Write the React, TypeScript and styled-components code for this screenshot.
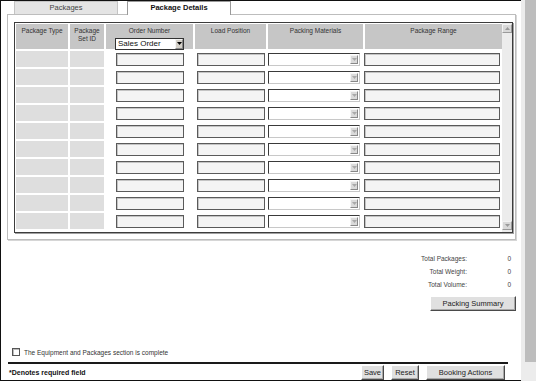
import * as React from 'react';
import styled, { createGlobalStyle } from 'styled-components';

const GlobalStyle = createGlobalStyle`
  html, body {
    margin: 0;
    padding: 0;
    background: #ffffff;
  }
  body {
    font-family: "Liberation Sans", Arial, sans-serif;
  }
`;

const Page = styled.div`
  width: 536px;
  height: 381px;
  display: flex;
  overflow: hidden;
`;

const Main = styled.div`
  flex: 1;
  display: flex;
  flex-direction: column;
  border-left: 1px solid #111;
  border-top: 1px solid #111;
  border-bottom: 1px solid #111;
`;

const PageScroll = styled.div`
  width: 15px;
  background: #ececec;
  display: flex;
  justify-content: flex-end;
`;

const PageThumb = styled.div`
  width: 11px;
  height: 362px;
  background: #bdbdbd;
`;

const TabBar = styled.div`
  display: flex;
  align-items: flex-start;
  gap: 9px;
  height: 13px;
  padding-left: 13px;
`;

const Tab = styled.div<{ $active?: boolean; $w: number }>`
  width: ${(p) => p.$w}px;
  height: ${(p) => (p.$active ? 14 : 13)}px;
  box-sizing: border-box;
  border: 1px solid ${(p) => (p.$active ? '#9a9a9a' : '#c4c4c4')};
  border-bottom: none;
  background: ${(p) => (p.$active ? '#ffffff' : '#e4e4e4')};
  color: ${(p) => (p.$active ? '#111' : '#444')};
  font-size: 7.5px;
  font-weight: ${(p) => (p.$active ? 'bold' : 'normal')};
  line-height: 12px;
  text-align: center;
  position: relative;
  z-index: 1;
`;

const Panel = styled.div`
  margin-left: 6px;
  width: 509px;
  box-sizing: border-box;
  border: 1px solid #bdbdbd;
  box-shadow: 1px 1px 0 #d6d6d6;
  padding: 7px 2px 6px 6px;
`;

const Frame = styled.div`
  display: flex;
  border: 1px solid #3c3c3c;
  box-shadow: 1px 1px 0 #a0a0a0;
`;

const Grid = styled.div`
  flex: 1;
  display: grid;
  grid-template-columns: 52px 34px 87px 71px 95px 137px;
  grid-template-rows: 25px;
  grid-auto-rows: 16px;
  column-gap: 2px;
  row-gap: 2px;
  padding: 1px 0 3px 1px;
`;

const HeaderCell = styled.div`
  background: #c6c6c6;
  color: #333;
  font-size: 6.5px;
  line-height: 7.5px;
  text-align: center;
  padding-top: 3px;
  display: flex;
  flex-direction: column;
  align-items: center;
  gap: 3px;
`;

const Cell = styled.div<{ $shaded?: boolean }>`
  background: ${(p) => (p.$shaded ? '#dedede' : 'transparent')};
  display: flex;
  align-items: center;
`;

const TextBox = styled.div<{ $w: number; $ml?: number }>`
  width: ${(p) => p.$w}px;
  margin-left: ${(p) => p.$ml || 0}px;
  height: 13px;
  box-sizing: border-box;
  background: #f4f4f4;
  border: 1px solid #5a5a5a;
  box-shadow: inset 1px 1px 0 #c4c4c4;
`;

const Combo = styled.div<{ $w: number }>`
  width: ${(p) => p.$w}px;
  height: 13px;
  box-sizing: border-box;
  background: #ffffff;
  border-top: 1px solid #3a3a3a;
  border-left: 1px solid #3a3a3a;
  border-right: 1px solid #c8c8c8;
  border-bottom: 1px solid #c8c8c8;
  display: flex;
  justify-content: flex-end;
  align-items: stretch;
  padding: 1px;
`;

const ComboArrow = styled.div<{ $dark?: boolean }>`
  width: 8px;
  background: ${(p) => (p.$dark ? '#d4d0c8' : '#dadada')};
  border: 1px solid;
  border-color: #f4f4f4 #888 #888 #f4f4f4;
  box-sizing: border-box;
  display: flex;
  align-items: center;
  justify-content: center;
`;

const OrderSelect = styled.div`
  width: 69px;
  height: 12px;
  box-sizing: border-box;
  background: #ffffff;
  border: 1px solid #333;
  display: flex;
  align-items: stretch;
  font-size: 8px;
  color: #111;
  text-align: left;
  margin-left: 9px;
  align-self: flex-start;
`;

const OrderSelectText = styled.span`
  flex: 1;
  line-height: 10px;
  padding-left: 2px;
`;

const GridScroll = styled.div`
  width: 10px;
  background: #ececec;
  display: flex;
  flex-direction: column;
  justify-content: space-between;
  padding: 1px 0 2px;
`;

const ScrollButton = styled.div`
  height: 9px;
  background: #d8d8d8;
  border: 1px solid;
  border-color: #f2f2f2 #9a9a9a #9a9a9a #f2f2f2;
  box-sizing: border-box;
  display: flex;
  align-items: center;
  justify-content: center;
`;

const Totals = styled.div`
  display: grid;
  grid-template-columns: auto 44px;
  justify-content: end;
  padding-right: 10px;
  margin-top: 12px;
  font-size: 6.5px;
  line-height: 13px;
  color: #444;
`;

const TotalLabel = styled.span`
  text-align: right;
`;

const TotalValue = styled.span`
  text-align: right;
`;

const SummaryRow = styled.div`
  display: flex;
  justify-content: flex-end;
  padding-right: 5px;
  margin-top: 5px;
`;

const Button = styled.button<{ $w: number }>`
  width: ${(p) => p.$w}px;
  height: 15px;
  padding: 0;
  margin: 0;
  background: #e0e0e0;
  border: 1px solid;
  border-color: #ffffff #4a4a4a #4a4a4a #ffffff;
  box-shadow: inset -1px -1px 0 #a8a8a8;
  font-family: "Liberation Sans", Arial, sans-serif;
  font-size: 7.5px;
  color: #222;
  line-height: 12px;
`;

const Bottom = styled.div`
  margin-top: auto;
`;

const CheckRow = styled.label`
  display: flex;
  align-items: center;
  gap: 4px;
  height: 12px;
  padding-left: 11px;
  margin-bottom: 4px;
  font-size: 6.5px;
  color: #333;
`;

const CheckBox = styled.span`
  width: 8px;
  height: 8px;
  box-sizing: border-box;
  border: 1px solid #555;
  box-shadow: inset 1px 1px 0 #bbb;
  background: #fff;
`;

const Rule = styled.div`
  height: 2px;
  background: #1a1a1a;
  margin: 0 13px 0 7px;
`;

const Footer = styled.div`
  display: flex;
  align-items: flex-end;
  height: 16px;
  padding: 0 16px 0 8px;
`;

const Required = styled.span`
  font-size: 7px;
  font-weight: bold;
  color: #111;
  align-self: center;
`;

const Actions = styled.div`
  margin-left: auto;
  display: flex;
  gap: 7px;
`;

const Tri = ({ up, color }: { up?: boolean; color: string }) => (
  <svg width="5" height="3" viewBox="0 0 5 3">
    <polygon points={up ? '0,3 5,3 2.5,0' : '0,0 5,0 2.5,3'} fill={color} />
  </svg>
);

const ROWS = Array.from({ length: 10 }, (_, i) => i);

export default function App() {
  return (
    <>
      <GlobalStyle />
      <Page>
        <Main>
          <TabBar>
            <Tab $w={104}>Packages</Tab>
            <Tab $w={104} $active>
              Package Details
            </Tab>
          </TabBar>
          <Panel>
            <Frame>
              <Grid>
                <HeaderCell>Package Type</HeaderCell>
                <HeaderCell>
                  Package
                  <br />
                  Set ID
                </HeaderCell>
                <HeaderCell>
                  Order Number
                  <OrderSelect>
                    <OrderSelectText>Sales Order</OrderSelectText>
                    <ComboArrow $dark>
                      <Tri color="#000" />
                    </ComboArrow>
                  </OrderSelect>
                </HeaderCell>
                <HeaderCell>Load Position</HeaderCell>
                <HeaderCell>Packing Materials</HeaderCell>
                <HeaderCell>Package Range</HeaderCell>
                {ROWS.map((r) => (
                  <React.Fragment key={r}>
                    <Cell $shaded />
                    <Cell $shaded />
                    <Cell>
                      <TextBox $w={68} $ml={10} />
                    </Cell>
                    <Cell>
                      <TextBox $w={68} $ml={2} />
                    </Cell>
                    <Cell>
                      <Combo $w={92}>
                        <ComboArrow>
                          <Tri color="#a8a8a8" />
                        </ComboArrow>
                      </Combo>
                    </Cell>
                    <Cell>
                      <TextBox $w={136} $ml={-1} />
                    </Cell>
                  </React.Fragment>
                ))}
              </Grid>
              <GridScroll>
                <ScrollButton>
                  <Tri up color="#9a9a9a" />
                </ScrollButton>
                <ScrollButton>
                  <Tri color="#9a9a9a" />
                </ScrollButton>
              </GridScroll>
            </Frame>
          </Panel>

          <Totals>
            <TotalLabel>Total Packages:</TotalLabel>
            <TotalValue>0</TotalValue>
            <TotalLabel>Total Weight:</TotalLabel>
            <TotalValue>0</TotalValue>
            <TotalLabel>Total Volume:</TotalLabel>
            <TotalValue>0</TotalValue>
          </Totals>

          <SummaryRow>
            <Button $w={86}>Packing Summary</Button>
          </SummaryRow>

          <Bottom>
            <CheckRow>
              <CheckBox />
              The Equipment and Packages section is complete
            </CheckRow>
            <Rule />
            <Footer>
              <Required>*Denotes required field</Required>
              <Actions>
                <Button $w={23}>Save</Button>
                <Button $w={28}>Reset</Button>
                <Button $w={79}>Booking Actions</Button>
              </Actions>
            </Footer>
          </Bottom>
        </Main>
        <PageScroll>
          <PageThumb />
        </PageScroll>
      </Page>
    </>
  );
}
